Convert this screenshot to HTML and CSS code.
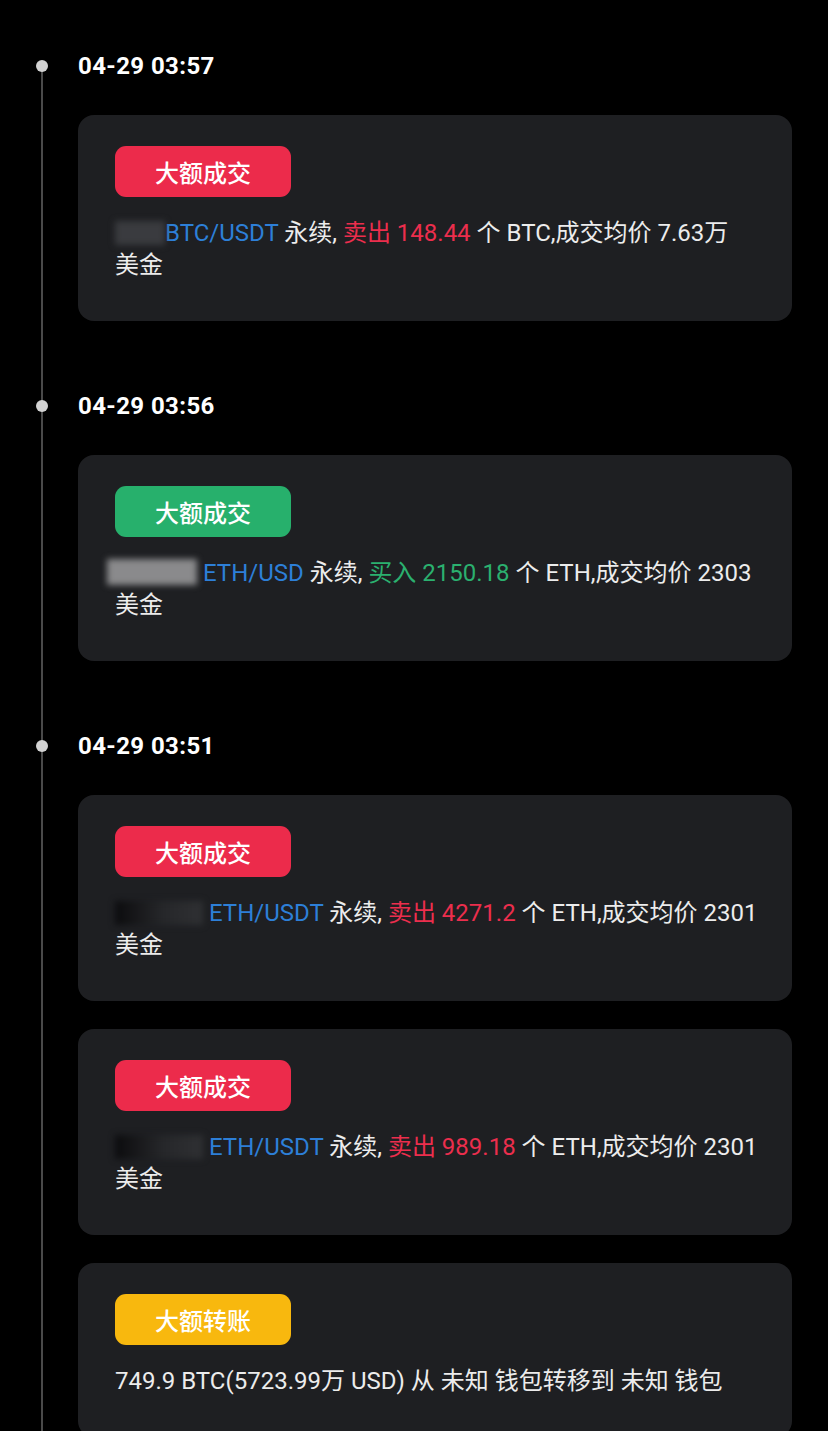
FILE: index.html
```html
<!DOCTYPE html>
<html lang="zh-CN">
<head>
<meta charset="utf-8">
<link rel="stylesheet" href="styles.css">
</head>
<body>
<div class="timeline">
  <section class="group">
    <div class="time">04-29 03:57</div>
    <div class="card">
      <span class="badge red">大额成交</span>
      <p class="msg"><span class="mask mask-a"></span><span class="pair">BTC/USDT</span> 永续, <span class="sell">卖出 148.44</span> 个 BTC,成交均价 7.63万 <span class="unit">美金</span></p>
    </div>
  </section>
  <section class="group">
    <div class="time">04-29 03:56</div>
    <div class="card">
      <span class="badge green">大额成交</span>
      <p class="msg"><span class="mask mask-b"></span> <span class="pair">ETH/USD</span> 永续, <span class="buy">买入 2150.18</span> 个 ETH,成交均价 2303 <span class="unit">美金</span></p>
    </div>
  </section>
  <section class="group">
    <div class="time">04-29 03:51</div>
    <div class="card">
      <span class="badge red">大额成交</span>
      <p class="msg"><span class="mask mask-c"></span> <span class="pair">ETH/USDT</span> 永续, <span class="sell">卖出 4271.2</span> 个 ETH,成交均价 2301 <span class="unit">美金</span></p>
    </div>
    <div class="card">
      <span class="badge red">大额成交</span>
      <p class="msg"><span class="mask mask-c"></span> <span class="pair">ETH/USDT</span> 永续, <span class="sell">卖出 989.18</span> 个 ETH,成交均价 2301 <span class="unit">美金</span></p>
    </div>
    <div class="card">
      <span class="badge yellow">大额转账</span>
      <p class="msg">749.9 BTC(5723.99万 USD) 从 未知 钱包转移到 未知 钱包</p>
    </div>
  </section>
</div>
</body>
</html>
```
FILE: styles.css
```css
html, body {
  margin: 0;
  background: #000;
}
body {
  font-family: Roboto, "Noto Sans CJK SC", sans-serif;
  color: #ececec;
  overflow: hidden;
}
.timeline {
  position: relative;
  padding: 52px 36px 0 78px;
}
.timeline::before {
  content: "";
  position: absolute;
  left: 41px;
  top: 66px;
  bottom: 0;
  width: 1.5px;
  background: #4a4a4a;
}
.group {
  margin-bottom: 71px;
}
.time {
  position: relative;
  font-size: 24px;
  line-height: 28px;
  font-weight: 700;
  color: #fff;
  letter-spacing: 0.4px;
  margin-bottom: 35px;
}
.time::before {
  content: "";
  position: absolute;
  left: -42px;
  top: 8px;
  width: 12px;
  height: 12px;
  border-radius: 50%;
  background: #d2d2d2;
}
.card {
  background: #1e1f22;
  border-radius: 16px;
  padding: 31px 20px 40px 37px;
  margin-bottom: 28px;
}
.badge {
  display: flex;
  align-items: center;
  justify-content: center;
  width: 176px;
  height: 51px;
  border-radius: 11px;
  font-size: 24px;
  color: #fff;
  font-weight: 500;
}
.badge.red { background: #ec2b4b; }
.badge.green { background: #27b06c; }
.badge.yellow { background: #f8b80e; }
.msg {
  margin: 20px 0 0;
  font-size: 24px;
  line-height: 32px;
  color: #ececec;
}
.unit { white-space: nowrap; }
.pair { color: #2d7fd8; }
.sell { color: #ec2e4d; }
.buy { color: #2bb06f; }
.mask {
  display: inline-block;
  vertical-align: -4px;
  height: 24px;
  filter: blur(3px);
}
.mask-a {
  width: 50px;
  background: #3a3b3f;
}
.mask-b {
  width: 90px;
  margin-left: -8px;
  height: 26px;
  background: #8a8a8c;
}
.mask-c {
  width: 88px;
  background: linear-gradient(90deg, #0c0c0e 0%, #26272a 55%, #2f3033 100%);
}
```
